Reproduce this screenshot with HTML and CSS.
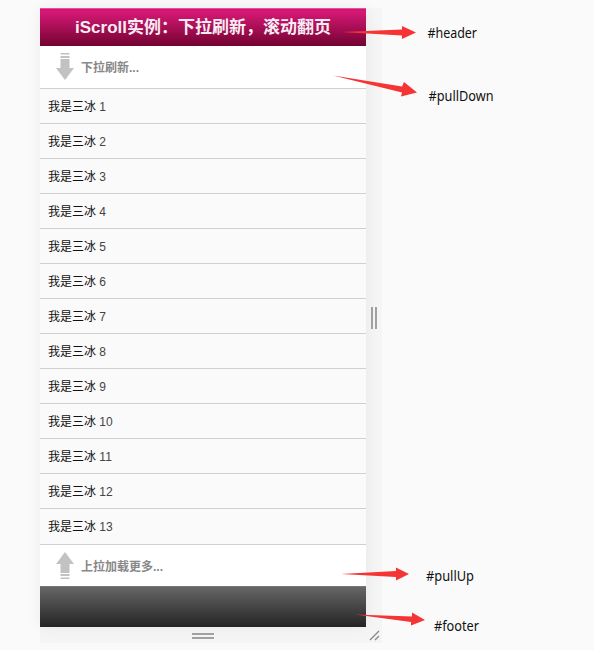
FILE: index.html
```html
<!DOCTYPE html>
<html lang="zh-CN">
<head>
<meta charset="utf-8">
<title>iScroll</title>
<link rel="stylesheet" href="styles.css">
</head>
<body>
<div class="device">
  <main class="screen">
    <header class="header">iScroll实例：下拉刷新，滚动翻页</header>
    <div class="pull pull-down">
      <svg class="pull-icon" width="18" height="27" viewBox="0 0 18 27"><path d="M4.500 0h9v1.500h-9zM4.500 3h9v2h-9zM4.500 6h9v9H18L9 27 0 15h4.500z"/></svg>
      <span>下拉刷新...</span>
    </div>
    <ul class="list">
      <li>我是三冰 <span>1</span></li>
      <li>我是三冰 <span>2</span></li>
      <li>我是三冰 <span>3</span></li>
      <li>我是三冰 <span>4</span></li>
      <li>我是三冰 <span>5</span></li>
      <li>我是三冰 <span>6</span></li>
      <li>我是三冰 <span>7</span></li>
      <li>我是三冰 <span>8</span></li>
      <li>我是三冰 <span>9</span></li>
      <li>我是三冰 <span>10</span></li>
      <li>我是三冰 <span>11</span></li>
      <li>我是三冰 <span>12</span></li>
      <li>我是三冰 <span>13</span></li>
    </ul>
    <div class="pull pull-up">
      <svg class="pull-icon" width="18" height="27" viewBox="0 0 18 27"><path d="M9 0l9 12h-4.500v9h-9v-9H0zM4.500 22h9v2h-9zM4.500 25.500h9V27h-9z"/></svg>
      <span>上拉加载更多...</span>
    </div>
    <footer class="footer"></footer>
  </main>
  <div class="grip-right"><i></i><i></i></div>
  <div class="grip-bottom"><i></i><i></i></div>
  <div class="grip-corner"><svg width="11" height="11" viewBox="0 0 11 11"><path d="M1 10L10 1M6 10l4-4"/></svg></div>
</div>
<svg class="notes" width="594" height="650" viewBox="0 0 594 650">
  <g class="arrows">
    <path d="M341 32L402 29.500V26L416 32.500 402 39V35.500z"/>
    <path d="M333 75.500L402 86.500L404 82 417 92.500 401 96.500 402 92.500z"/>
    <path d="M341 574L396 571V567.500L409 574 396 580.500V577z"/>
    <path d="M355 614.500L412 616.500V612.500L425 620 411 625.500V622z"/>
  </g>
  <g class="labels">
    <text x="427.500" y="38" textLength="49.500" lengthAdjust="spacingAndGlyphs">#header</text>
    <text x="428.500" y="100.500" textLength="65" lengthAdjust="spacingAndGlyphs">#pullDown</text>
    <text x="426" y="581" textLength="48" lengthAdjust="spacingAndGlyphs">#pullUp</text>
    <text x="434" y="631" textLength="45" lengthAdjust="spacingAndGlyphs">#footer</text>
  </g>
</svg>
</body>
</html>
```
FILE: styles.css
```css
* { box-sizing: border-box; }

body {
  margin: 0;
  height: 650px;
  padding: 8px 0 0 40px;
  overflow: hidden;
  background: #fafafa;
  font-family: "Liberation Sans", "Noto Sans CJK SC", sans-serif;
}

.device {
  display: grid;
  grid-template-columns: 326px 16px;
  grid-template-rows: 619px 16px;
  width: 342px;
  background: #f5f5f5;
}

.screen {
  display: flex;
  flex-direction: column;
  background: #fafafa;
  box-shadow: 0 0 14px rgba(0, 0, 0, 0.06);
}

.header {
  height: 38px;
  background: linear-gradient(#cf1673, #d51875 8%, #730331);
  border-top: 1px solid #e64f9d;
  color: #f7edf3;
  font-size: 17px;
  font-weight: bold;
  line-height: 38px;
  text-align: center;
  white-space: nowrap;
}

.pull {
  display: flex;
  align-items: center;
  gap: 7px;
  height: 42px;
  padding-left: 16px;
  background: #fff;
  color: #888;
  font-size: 12px;
  font-weight: bold;
}

.pull-down { padding-bottom: 2px; }

.pull-icon { fill: #c2c2c2; }

.list {
  margin: 0;
  padding: 0;
  list-style: none;
  border-top: 1px solid #d0d0d0;
}

.list li {
  height: 35px;
  padding-left: 8px;
  border-bottom: 1px solid #d0d0d0;
  color: #111;
  font-size: 12px;
  line-height: 37px;
}

.list li:last-child { height: 36px; }

.list span { color: #444; }

.pull-up { height: 41px; }

.footer {
  flex: 1;
  background: linear-gradient(#666, #242424);
  border-top: 1px solid #777;
}

.grip-right,
.grip-bottom,
.grip-corner {
  display: flex;
  align-items: center;
  justify-content: center;
}

.grip-right { gap: 2px; }

.grip-right i {
  width: 2px;
  height: 22px;
  background: #a0a0a0;
}

.grip-bottom {
  grid-row: 2;
  grid-column: 1;
  flex-direction: column;
  gap: 2px;
  padding-top: 1px;
}

.grip-bottom i {
  width: 22px;
  height: 2px;
  background: #a0a0a0;
}

.grip-corner path {
  stroke: #888;
  stroke-width: 1.3;
}

.notes {
  position: absolute;
  top: 0;
  left: 0;
}

.arrows { fill: #f53434; }

.labels {
  fill: #111;
  font-family: "Noto Sans", sans-serif;
  font-size: 14.5px;
}
```
